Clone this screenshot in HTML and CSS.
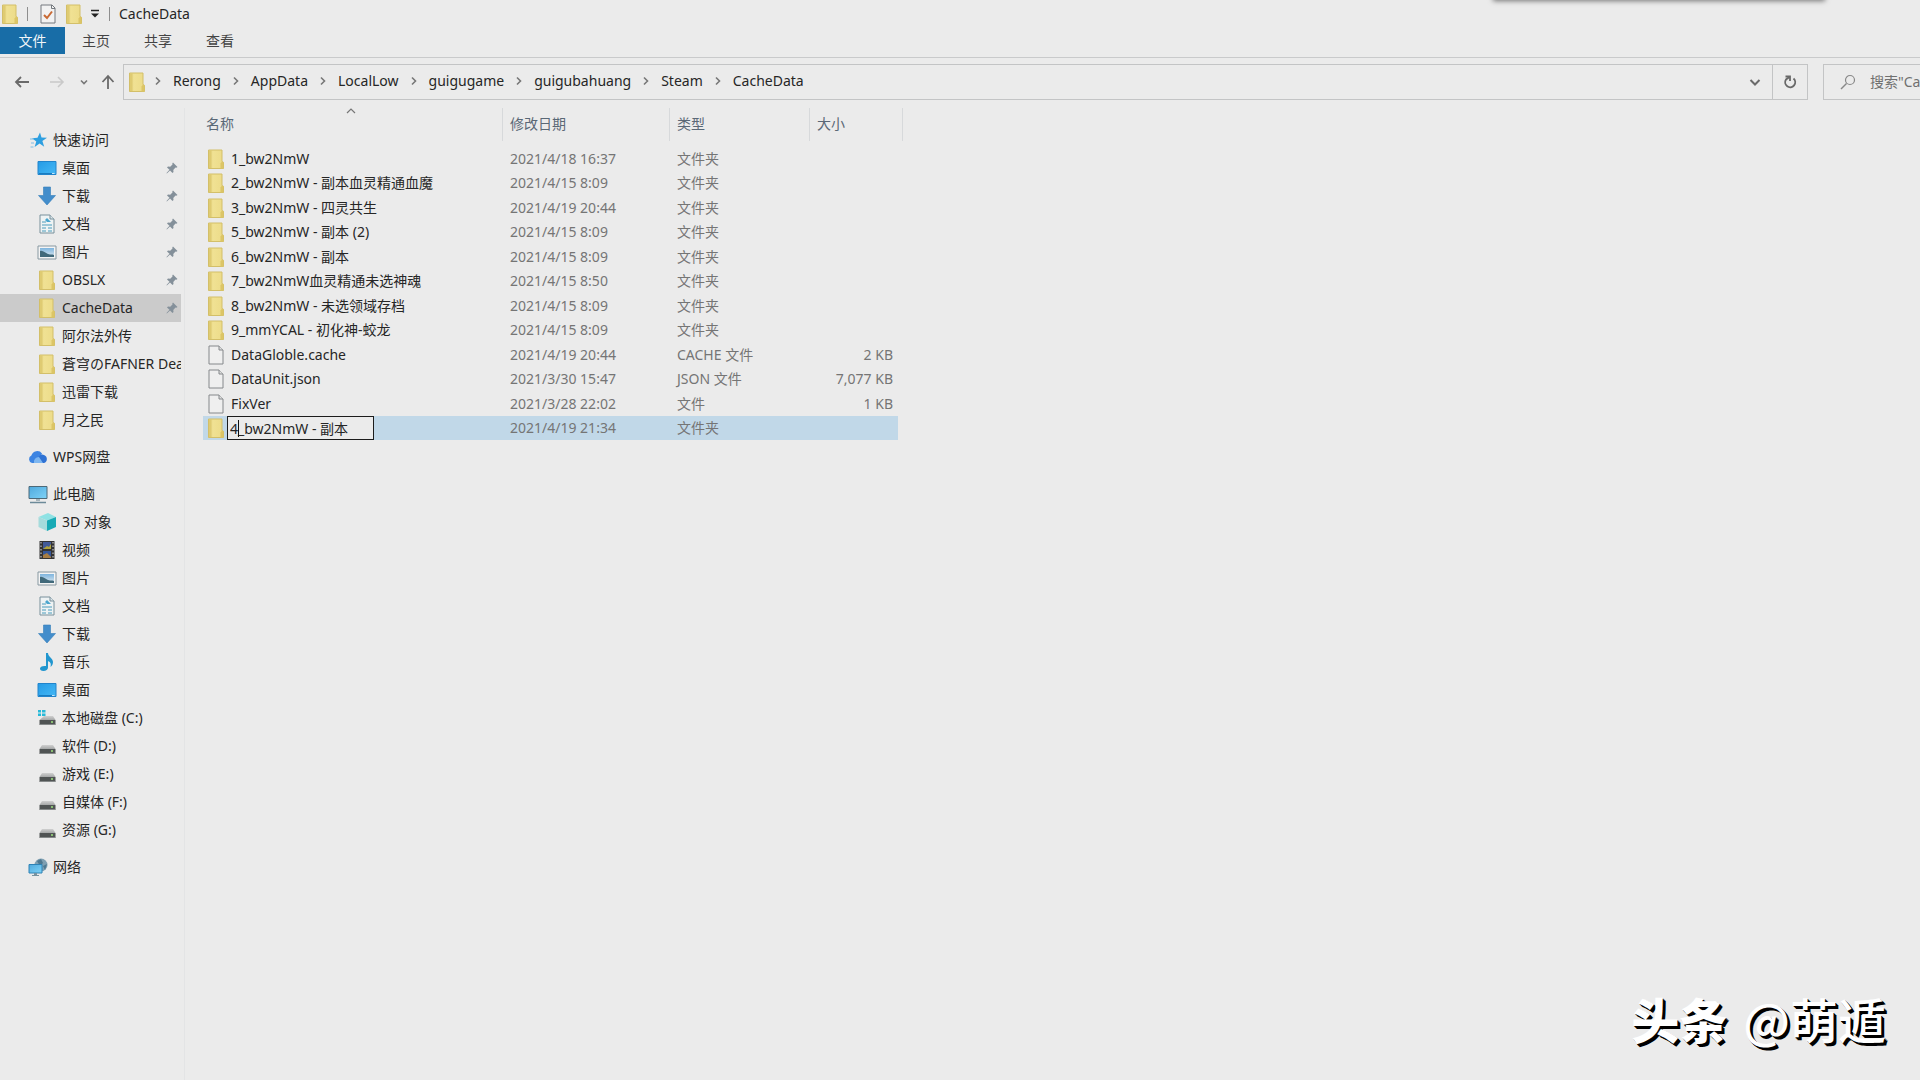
FILE: index.html
```html
<!DOCTYPE html>
<html lang="zh-CN">
<head>
<meta charset="utf-8">
<meta name="viewport" content="width=device-width, initial-scale=1">
<title>CacheData</title>
<link rel="stylesheet" href="styles.css">
</head>
<body>
<svg class="sprite" aria-hidden="true">
  <defs>
    <linearGradient id="g-folder" x1="0" y1="0" x2="1" y2="0"><stop offset="0" stop-color="#e3d07a"/><stop offset=".3" stop-color="#f0e193"/><stop offset="1" stop-color="#ecdb88"/></linearGradient>
    <linearGradient id="g-blue" x1="0" y1="0" x2="1" y2="1"><stop offset="0" stop-color="#259be6"/><stop offset="1" stop-color="#45b8f5"/></linearGradient>
    <linearGradient id="g-screen" x1="0" y1="0" x2="1" y2="1"><stop offset="0" stop-color="#4fa9dd"/><stop offset="1" stop-color="#7fd3f7"/></linearGradient>
    <linearGradient id="g-drive" x1="0" y1="0" x2="0" y2="1"><stop offset="0" stop-color="#d0d0d0"/><stop offset="1" stop-color="#a4a6a6"/></linearGradient>
    <linearGradient id="g-sky" x1="0" y1="0" x2="0" y2="1"><stop offset="0" stop-color="#7db4de"/><stop offset="1" stop-color="#dfeaf0"/></linearGradient>
  </defs>
  <symbol id="i-folder" viewBox="0 0 20 20"><path d="M2.500 1h13.500v11.500l1.500.8v6.200h-15z" fill="url(#g-folder)" stroke="#d3bf69"/><path d="M3 1.500h2.500v17.500H3z" fill="#dfcb72"/><path d="M14.500 19.500v-5l1.500-2 1.500 1v6z" fill="#dcc566"/></symbol>
  <symbol id="i-file" viewBox="0 0 20 20"><path d="M3 1h10l4 4v14H3z" fill="#efefef" stroke="#85888b"/><path d="M13 1v4h4" fill="#ddd" stroke="#85888b"/></symbol>
  <symbol id="i-props" viewBox="0 0 20 20"><path d="M3 1h11l3 3v15H3z" fill="#f2f2f2" stroke="#74797e"/><path d="M13.500 1v3.500H17" fill="none" stroke="#74797e"/><path d="M6 11l3 3 5-6.500" fill="none" stroke="#c96a35" stroke-width="2"/></symbol>
  <symbol id="i-star" viewBox="0 0 20 20"><path d="M12 2.500l1.500 5 5.500.3-4.600 3.200 1.800 5.800-4.600-3.300-5 3.500 1.700-5.600L4 8.300l5.500-.5z" fill="#2e9fe0"/><path d="M2 9h4M3 13h3M2.500 17h3" stroke="#7cbde6"/></symbol>
  <symbol id="i-desktop" viewBox="0 0 20 20"><path d="M1 3.500h18v13H1z" fill="url(#g-blue)" stroke="#2284cb"/><path d="M2 15.500h13" stroke="#197cc0"/><path d="M15 15.500h2.500" stroke="#c5e6f9"/></symbol>
  <symbol id="i-down" viewBox="0 0 20 20"><path d="M6.500 1h7v8.500h5L10 19 1.500 9.500h5z" fill="#438dcb" stroke="#347dbb" stroke-width=".6"/></symbol>
  <symbol id="i-doc" viewBox="0 0 20 20"><path d="M3 1h10l4 4v14H3z" fill="#eef3f4" stroke="#79909b"/><path d="M13 1v4h4" fill="#dce5e9" stroke="#79909b"/><path d="M5 8h4M5 11h10M5 14h4M11 14h4M5 17h4M11 17h4" stroke="#4b9cbc"/><path d="M8 6l2-2 2 2 2 2h-4" fill="#4aa6ce"/></symbol>
  <symbol id="i-pic" viewBox="0 0 20 20"><path d="M1 4h18v13H1z" fill="#f4f4f4" stroke="#8798a1"/><path d="M3 6h14v9H3z" fill="url(#g-sky)"/><path d="M3 9c3-1 5 2 8 3s4 0 6 1v2H3z" fill="#41697a"/></symbol>
  <symbol id="i-cloud" viewBox="0 0 20 20"><path d="M4 16a4 4 0 0 1-.6-7.500A6 6 0 0 1 14 6.500L9.500 16z" fill="#3c84e2"/><path d="M6 16l5-6.500a4.500 4.500 0 0 1 5-1.600A4.300 4.300 0 0 1 16 16z" fill="#2f72d4"/><path d="M6 16a5 5 0 0 1 5-6l4 6z" fill="#7db6f0"/></symbol>
  <symbol id="i-pc" viewBox="0 0 20 20"><path d="M1 2.500h18v12H1z" fill="url(#g-screen)" stroke="#4d6978"/><path d="M8 15h4v2H8z" fill="#a7b5bb"/><path d="M2 18.500h16" stroke="#6c8a99" stroke-width="1.500"/></symbol>
  <symbol id="i-cube" viewBox="0 0 20 20"><path d="M1.500 5L11 1l8 4-9 3.500z" fill="#8fe2e4"/><path d="M1.500 5l8.500 3.500V19l-8.500-4z" fill="#a5dbdc"/><path d="M10 8.500L19 5v10l-9 4z" fill="#18aab5"/></symbol>
  <symbol id="i-video" viewBox="0 0 20 20"><path d="M2.500 1h15v18h-15z" fill="#333"/><path d="M4 2v17M16 2v17" stroke="#ddd" stroke-dasharray="1.500 2"/><path d="M6 2h8v7H6z" fill="#435b98"/><path d="M6 11h8v7H6z" fill="#34579a"/><path d="M6 9l4-3 2 1 2-3v5z" fill="#b1a33b"/><path d="M6 18v-3l4-2 4 4v1z" fill="#a67d43"/></symbol>
  <symbol id="i-music" viewBox="0 0 20 20"><path d="M9 1h2c0 4 5 5 5 9 0 2-1 4-2.500 5 1-4-.5-5-2.500-6v6.500c0 2-2 3.500-4.500 3.500S3 17.800 3 16.500 5 13.500 9 14z" fill="#2196cf"/></symbol>
  <symbol id="i-drive" viewBox="0 0 20 20"><path d="M5 9h11l2.500 4h-16z" fill="url(#g-drive)"/><path d="M2.500 13h16v5h-16z" fill="#505454"/><path d="M3 17.500h15" stroke="#858989"/><path d="M14 15h2" stroke="#9be07d" stroke-width="1.500"/></symbol>
  <symbol id="i-sysdrive" viewBox="0 0 20 20"><path d="M7 8h9l2.500 4h-16z" fill="url(#g-drive)"/><path d="M2.500 12h16v5h-16z" fill="#505454"/><path d="M3 16.500h15" stroke="#858989"/><path d="M14 14h2" stroke="#9be07d" stroke-width="1.500"/><path d="M1 2h3v2.500H1zM5 2h3.500v2.500H5zM1 5.500h3V8H1zM5 5.500h3.500V8H5z" fill="#27b9d8"/></symbol>
  <symbol id="i-net" viewBox="0 0 20 20"><circle cx="13" cy="8" r="6.500" fill="#7e9fb2"/><path d="M9 4l4-2 2 4-3 3zM15 9l4-2-2 6z" fill="#4e7890"/><path d="M1 7.500h13v8.500H1z" fill="url(#g-screen)" stroke="#2e82b5"/><path d="M6 16h3v2H6zM4 18h7v1H4z" fill="#77929f"/></symbol>
  <symbol id="i-pin" viewBox="0 0 12 12"><path d="M7 .5L11.500 5l-1.200.8-.8-.3L7.300 8l.2 2-1 1L4 8.500.8 11.500.5 11l3-3.200L1 5.500l1-1 2.200.2L6.500 2.500 6.300 1.500z" fill="#84909a"/></symbol>
  <symbol id="i-chev" viewBox="0 0 6 10"><path d="M1 1.500L4.500 5 1 8.500" fill="none" stroke="#777" stroke-width="1.600"/></symbol>
</svg>

<div class="window">
  <div class="popup-edge"></div>
  <header class="titlebar">
    <svg class="icon"><use href="#i-folder"/></svg>
    <span class="bar"></span>
    <button class="quick" aria-label="属性"><svg class="icon"><use href="#i-props"/></svg></button>
    <button class="quick" aria-label="新建文件夹"><svg class="icon"><use href="#i-folder"/></svg></button>
    <button class="quick" aria-label="自定义快速访问工具栏"><svg width="10" height="10" viewBox="0 0 10 10"><path d="M1 1.500h8" stroke="#222" stroke-width="1.500"/><path d="M1 4.500h8L5 8.500z" fill="#222"/></svg></button>
    <span class="bar"></span>
    <h1 class="title">CacheData</h1>
  </header>

  <nav class="tabs" aria-label="功能区">
    <button class="tab tab-file">文件</button>
    <button class="tab">主页</button>
    <button class="tab">共享</button>
    <button class="tab">查看</button>
  </nav>

  <div class="navbar">
    <div class="arrows">
      <button aria-label="后退"><svg width="16" height="16" viewBox="0 0 16 16"><path d="M15 8H2M7 3L2 8l5 5" fill="none" stroke="#6a6a6a" stroke-width="1.800"/></svg></button>
      <button aria-label="前进" disabled><svg width="16" height="16" viewBox="0 0 16 16"><path d="M1 8h13M9 3l5 5-5 5" fill="none" stroke="#c9c9c9" stroke-width="1.600"/></svg></button>
      <button aria-label="最近浏览的位置"><svg width="8" height="16" viewBox="0 0 8 16"><path d="M1 6.500l3 3 3-3" fill="none" stroke="#777" stroke-width="1.600"/></svg></button>
      <button aria-label="上移"><svg width="16" height="16" viewBox="0 0 16 16"><path d="M8 15V2M2.500 8L8 2l5.500 6" fill="none" stroke="#6a6a6a" stroke-width="1.800"/></svg></button>
    </div>
    <div class="address">
      <svg class="icon"><use href="#i-folder"/></svg>
      <ol class="crumbs">
        <li><svg class="chev"><use href="#i-chev"/></svg><a href="#">Rerong</a></li>
        <li><svg class="chev"><use href="#i-chev"/></svg><a href="#">AppData</a></li>
        <li><svg class="chev"><use href="#i-chev"/></svg><a href="#">LocalLow</a></li>
        <li><svg class="chev"><use href="#i-chev"/></svg><a href="#">guigugame</a></li>
        <li><svg class="chev"><use href="#i-chev"/></svg><a href="#">guigubahuang</a></li>
        <li><svg class="chev"><use href="#i-chev"/></svg><a href="#">Steam</a></li>
        <li><svg class="chev"><use href="#i-chev"/></svg><a href="#">CacheData</a></li>
      </ol>
      <button class="addr-btn" aria-label="以前的位置"><svg width="12" height="12" viewBox="0 0 12 12"><path d="M1.500 4L6 8.500 10.500 4" fill="none" stroke="#6a6a6a" stroke-width="2"/></svg></button>
      <button class="addr-btn refresh" aria-label="刷新"><svg width="14" height="14" viewBox="0 0 14 14"><path d="M10.500 3.500a5 5 0 1 1-7.500 1L6.500 2" fill="none" stroke="#696969" stroke-width="1.900"/><path d="M2.500 1.500H7V6" fill="none" stroke="#696969" stroke-width="1.800"/></svg></button>
    </div>
    <label class="search">
      <svg width="16" height="16" viewBox="0 0 16 16"><circle cx="10" cy="6" r="4.500" fill="none" stroke="#888" stroke-width="1.200"/><path d="M6.500 9.500L1 15" stroke="#888" stroke-width="1.400"/></svg>
      <input type="text" aria-label="搜索" placeholder='搜索"CacheData"'>
    </label>
  </div>

  <div class="body">
    <nav class="sidebar" aria-label="导航窗格">
      <ul class="group">
        <li><a class="root" href="#"><svg class="icon"><use href="#i-star"/></svg><span>快速访问</span></a></li>
        <li><a href="#"><svg class="icon"><use href="#i-desktop"/></svg><span>桌面</span><svg class="pin"><use href="#i-pin"/></svg></a></li>
        <li><a href="#"><svg class="icon"><use href="#i-down"/></svg><span>下载</span><svg class="pin"><use href="#i-pin"/></svg></a></li>
        <li><a href="#"><svg class="icon"><use href="#i-doc"/></svg><span>文档</span><svg class="pin"><use href="#i-pin"/></svg></a></li>
        <li><a href="#"><svg class="icon"><use href="#i-pic"/></svg><span>图片</span><svg class="pin"><use href="#i-pin"/></svg></a></li>
        <li><a href="#"><svg class="icon"><use href="#i-folder"/></svg><span>OBSLX</span><svg class="pin"><use href="#i-pin"/></svg></a></li>
        <li><a class="current" href="#"><svg class="icon"><use href="#i-folder"/></svg><span>CacheData</span><svg class="pin"><use href="#i-pin"/></svg></a></li>
        <li><a href="#"><svg class="icon"><use href="#i-folder"/></svg><span>阿尔法外传</span></a></li>
        <li><a href="#"><svg class="icon"><use href="#i-folder"/></svg><span>蒼穹のFAFNER Dead</span></a></li>
        <li><a href="#"><svg class="icon"><use href="#i-folder"/></svg><span>迅雷下载</span></a></li>
        <li><a href="#"><svg class="icon"><use href="#i-folder"/></svg><span>月之民</span></a></li>
      </ul>
      <ul class="group">
        <li><a class="root" href="#"><svg class="icon"><use href="#i-cloud"/></svg><span>WPS网盘</span></a></li>
      </ul>
      <ul class="group">
        <li><a class="root" href="#"><svg class="icon"><use href="#i-pc"/></svg><span>此电脑</span></a></li>
        <li><a href="#"><svg class="icon"><use href="#i-cube"/></svg><span>3D 对象</span></a></li>
        <li><a href="#"><svg class="icon"><use href="#i-video"/></svg><span>视频</span></a></li>
        <li><a href="#"><svg class="icon"><use href="#i-pic"/></svg><span>图片</span></a></li>
        <li><a href="#"><svg class="icon"><use href="#i-doc"/></svg><span>文档</span></a></li>
        <li><a href="#"><svg class="icon"><use href="#i-down"/></svg><span>下载</span></a></li>
        <li><a href="#"><svg class="icon"><use href="#i-music"/></svg><span>音乐</span></a></li>
        <li><a href="#"><svg class="icon"><use href="#i-desktop"/></svg><span>桌面</span></a></li>
        <li><a href="#"><svg class="icon"><use href="#i-sysdrive"/></svg><span>本地磁盘 (C:)</span></a></li>
        <li><a href="#"><svg class="icon"><use href="#i-drive"/></svg><span>软件 (D:)</span></a></li>
        <li><a href="#"><svg class="icon"><use href="#i-drive"/></svg><span>游戏 (E:)</span></a></li>
        <li><a href="#"><svg class="icon"><use href="#i-drive"/></svg><span>自媒体 (F:)</span></a></li>
        <li><a href="#"><svg class="icon"><use href="#i-drive"/></svg><span>资源 (G:)</span></a></li>
      </ul>
      <ul class="group">
        <li><a class="root" href="#"><svg class="icon"><use href="#i-net"/></svg><span>网络</span></a></li>
      </ul>
    </nav>

    <main class="content">
      <table class="files">
        <colgroup><col class="c-name"><col class="c-date"><col class="c-type"><col class="c-size"><col class="c-end"></colgroup>
        <thead>
          <tr>
            <th scope="col" class="sorted">名称<svg class="sort" width="10" height="6" viewBox="0 0 10 6"><path d="M1 5l4-4 4 4" fill="none" stroke="#777" stroke-width="1.200"/></svg></th>
            <th scope="col">修改日期</th>
            <th scope="col">类型</th>
            <th scope="col" colspan="2">大小</th>
          </tr>
        </thead>
        <tbody>
          <tr><td><div class="name"><svg class="icon"><use href="#i-folder"/></svg>1_bw2NmW</div></td><td>2021/4/18 16:37</td><td>文件夹</td><td></td></tr>
          <tr><td><div class="name"><svg class="icon"><use href="#i-folder"/></svg>2_bw2NmW - 副本血灵精通血魔</div></td><td>2021/4/15 8:09</td><td>文件夹</td><td></td></tr>
          <tr><td><div class="name"><svg class="icon"><use href="#i-folder"/></svg>3_bw2NmW - 四灵共生</div></td><td>2021/4/19 20:44</td><td>文件夹</td><td></td></tr>
          <tr><td><div class="name"><svg class="icon"><use href="#i-folder"/></svg>5_bw2NmW - 副本 (2)</div></td><td>2021/4/15 8:09</td><td>文件夹</td><td></td></tr>
          <tr><td><div class="name"><svg class="icon"><use href="#i-folder"/></svg>6_bw2NmW - 副本</div></td><td>2021/4/15 8:09</td><td>文件夹</td><td></td></tr>
          <tr><td><div class="name"><svg class="icon"><use href="#i-folder"/></svg>7_bw2NmW血灵精通未选神魂</div></td><td>2021/4/15 8:50</td><td>文件夹</td><td></td></tr>
          <tr><td><div class="name"><svg class="icon"><use href="#i-folder"/></svg>8_bw2NmW - 未选领域存档</div></td><td>2021/4/15 8:09</td><td>文件夹</td><td></td></tr>
          <tr><td><div class="name"><svg class="icon"><use href="#i-folder"/></svg>9_mmYCAL - 初化神-蛟龙</div></td><td>2021/4/15 8:09</td><td>文件夹</td><td></td></tr>
          <tr><td><div class="name"><svg class="icon"><use href="#i-file"/></svg>DataGloble.cache</div></td><td>2021/4/19 20:44</td><td>CACHE 文件</td><td>2 KB</td></tr>
          <tr><td><div class="name"><svg class="icon"><use href="#i-file"/></svg>DataUnit.json</div></td><td>2021/3/30 15:47</td><td>JSON 文件</td><td>7,077 KB</td></tr>
          <tr><td><div class="name"><svg class="icon"><use href="#i-file"/></svg>FixVer</div></td><td>2021/3/28 22:02</td><td>文件</td><td>1 KB</td></tr>
          <tr class="selected"><td><div class="name"><svg class="icon"><use href="#i-folder"/></svg><span class="rename"><input type="text" aria-label="重命名" value="4_bw2NmW - 副本"><i class="caret"></i></span></div></td><td>2021/4/19 21:34</td><td>文件夹</td><td></td></tr>
        </tbody>
      </table>
    </main>
  </div>
  <div class="watermark"><b>头条</b><span>@萌遁</span></div>
</div>
</body>
</html>
```
FILE: styles.css
```css
* { box-sizing: border-box; }

body {
  margin: 0;
  background: #ebebeb;
  color: #262626;
  font: 14px/20px "Noto Sans", "Noto Sans CJK SC", sans-serif;
}

button, input { font: inherit; color: inherit; }
button { border: 0; padding: 0; background: none; display: flex; align-items: center; justify-content: center; }
a { color: inherit; text-decoration: none; }
ul, ol { list-style: none; margin: 0; padding: 0; }
svg { display: block; flex: none; }

.sprite { position: absolute; width: 0; height: 0; }
.icon { width: 20px; height: 20px; }

.window {
  position: relative;
  min-height: 100vh;
  display: flex;
  flex-direction: column;
  overflow: hidden;
}

.popup-edge {
  position: absolute;
  top: -20px;
  right: 95px;
  width: 332px;
  height: 20px;
  box-shadow: 0 1px 5px rgba(0, 0, 0, .5);
}

/* title bar */
.titlebar { display: flex; align-items: center; height: 27px; }
.bar { width: 1px; height: 14px; margin: 0 8px; background: #8e8e8e; }
.titlebar > .icon { margin-right: -1px; }
.titlebar > .bar:first-of-type { margin-right: 10px; }
.quick { margin-right: 6px; }
.quick + .bar { margin: 0 9px 0 3px; }
.title { margin: 0; font-size: 14px; font-weight: 400; }

/* ribbon tabs */
.tabs { display: flex; height: 31px; border-bottom: 1px solid #c9cacb; }
.tab { width: 62px; height: 27px; color: #444; }
.tab-file { width: 65px; background: #186da7; color: #f1f5f8; }

/* navigation bar */
.navbar { display: flex; height: 48px; padding: 6px 0 6px 14px; }
.arrows { display: flex; align-items: center; width: 109px; gap: 19px; }
.arrows button:nth-child(3) { margin-left: -4px; }
.arrows button:nth-child(4) { margin-left: -7px; }
.address { display: flex; align-items: center; flex: 1; border: 1px solid #c3c4c5; padding-left: 3px; }
.crumbs { display: flex; flex: 1; margin-left: 8px; padding-bottom: 2px; }
.crumbs li { display: flex; align-items: center; }
.crumbs li + li { margin-left: 12px; }
.chev { width: 6px; height: 10px; margin-right: 12px; }
.addr-btn { width: 35px; align-self: stretch; }
.refresh { border-left: 1px solid #c3c4c5; }
.search {
  display: flex;
  align-items: center;
  gap: 14px;
  width: 97px;
  margin-left: 15px;
  padding-left: 16px;
  border: 1px solid #c3c4c5;
  border-right: 0;
  overflow: hidden;
}
.search input { flex: none; width: 160px; border: 0; padding: 0; background: none; outline: 0; }
.search input::placeholder { color: #707070; opacity: 1; }

/* body */
.body { display: flex; flex: 1; }

.sidebar { flex: none; width: 185px; margin-top: 2px; padding: 18px 3px 0 0; border-right: 1px solid #e3e4e5; }
.group + .group { margin-top: 9px; }
.sidebar a { display: flex; align-items: center; gap: 5px; height: 28px; padding-left: 37px; overflow: hidden; white-space: nowrap; }
.sidebar a.root { padding-left: 28px; }
.sidebar a.current { background: #cbcbcb; }
.sidebar span { flex: 1; }
.pin { width: 12px; height: 12px; margin-right: 3px; }

.content { flex: 1; padding: 2px 0 0 18px; }

.files { table-layout: fixed; width: 700px; border-collapse: separate; border-spacing: 0; }
.c-name { width: 300px; }
.c-date { width: 167px; }
.c-type { width: 140px; }
.c-size { width: 88px; }
.c-end { width: 5px; }
.files th {
  position: relative;
  height: 33px;
  padding: 0 0 2px 7px;
  border-right: 1px solid #d7d9db;
  color: #5a6876;
  font-weight: 400;
  text-align: left;
}
.files th.sorted { padding-left: 3px; }
.sort { position: absolute; top: 0; left: 50%; margin-left: -7px; }
.files thead::after { content: ""; display: block; height: 5px; }
.files tbody tr { height: 25px; }
.files tbody tr:nth-child(even) { height: 24px; }
.files td { padding: 0 0 0 7px; color: #757575; line-height: 20px; white-space: nowrap; }
.files td:first-child { padding-left: 3px; color: #262626; }
.files td:nth-child(4) { padding: 0 5px 0 0; text-align: right; }
.selected td { background: #c1d8e8; }
.name { display: flex; align-items: center; gap: 5px; }
.rename { position: relative; margin: -2px 0 -2px -4px; }
.rename input {
  display: block;
  width: 147px;
  height: 24px;
  padding: 0 2px;
  border: 1px solid #1c1c1c;
  background: #ebebeb;
  outline: 0;
}
.caret { position: absolute; left: 11px; top: 4px; width: 1px; height: 17px; background: #111; }

.watermark {
  position: absolute;
  right: 34px;
  bottom: 26px;
  display: flex;
  gap: 16px;
  color: #fff;
  font: 500 48px/72px "Noto Sans CJK SC", sans-serif;
  text-shadow: 1px 1px 0 #000, 2px 2px 0 #000, 3px 3px 0 #000;
}
.watermark b { font-weight: 900; }
```
